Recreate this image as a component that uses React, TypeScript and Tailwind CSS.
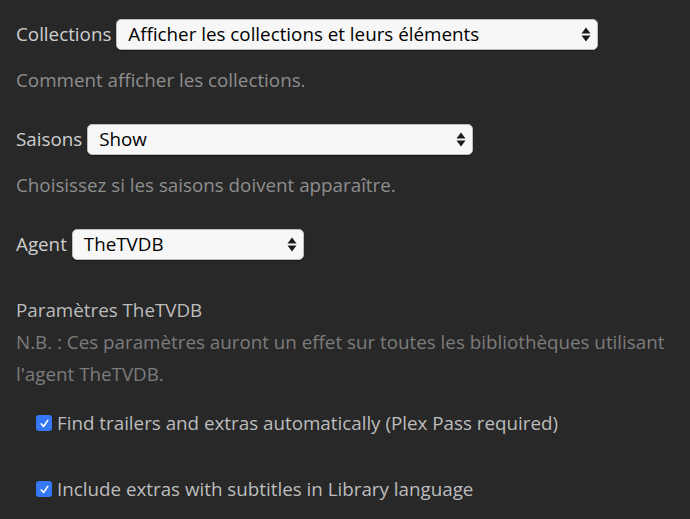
import React from 'react'

function Arrows() {
  return (
    <svg width="10" height="17" viewBox="0 0 10 17" className="shrink-0">
      <path d="M5 1.5 L9.5 7.5 L0.5 7.5 Z" fill="#1a1a1a" />
      <path d="M5 15.5 L9.5 9.5 L0.5 9.5 Z" fill="#1a1a1a" />
    </svg>
  )
}

function Select({ value, width }: { value: string; width: string }) {
  return (
    <div
      className={`${width} h-[31px] flex items-center justify-between pl-[11px] pr-[6px] bg-[#f7f7f7] rounded-[5px] border border-[#bdbdbd] shadow-[0_1px_1px_rgba(0,0,0,0.4)] text-black`}
    >
      <span>{value}</span>
      <Arrows />
    </div>
  )
}

function Checkbox() {
  return (
    <span className="w-4 h-4 rounded-[3px] bg-[#3478f6] flex items-center justify-center shrink-0">
      <svg width="11" height="11" viewBox="0 0 12 12">
        <path d="M2.5 6.5 L5 9.2 L9.6 2.6" stroke="white" strokeWidth="1.8" fill="none" strokeLinecap="round" strokeLinejoin="round" />
      </svg>
    </span>
  )
}

export default function App() {
  return (
    <div className="w-[690px] h-[519px] overflow-hidden bg-[#282828] px-4 pt-[19px] font-['Open_Sans',sans-serif] text-[18.8px]">
      <div className="flex items-center gap-[5px]">
        <span className="text-[#cfcfcf]">Collections</span>
        <Select value="Afficher les collections et leurs éléments" width="w-[482px]" />
      </div>
      <p className="mt-[17px] leading-[26px] text-[#8e8e8e]">Comment afficher les collections.</p>

      <div className="mt-[31px] flex items-center gap-[5px]">
        <span className="text-[#cfcfcf]">Saisons</span>
        <Select value="Show" width="w-[386px]" />
      </div>
      <p className="mt-[17px] leading-[26px] text-[#8e8e8e]">Choisissez si les saisons doivent apparaître.</p>

      <div className="mt-[31px] flex items-center gap-[5px]">
        <span className="text-[#cfcfcf]">Agent</span>
        <Select value="TheTVDB" width="w-[232px]" />
      </div>

      <div className="mt-[34px] leading-[32px]">
        <p className="text-[#bdbdbd]">Paramètres TheTVDB</p>
        <p className="text-[#7c7c7c]">N.B. : Ces paramètres auront un effet sur toutes les bibliothèques utilisant l'agent TheTVDB.</p>
      </div>

      <div className="mt-[20px] pl-5 flex flex-col gap-[40px]">
        <label className="flex items-center gap-[5px] leading-[26px] text-[#bdbdbd]">
          <Checkbox />
          <span>Find trailers and extras automatically (Plex Pass required)</span>
        </label>
        <label className="flex items-center gap-[5px] leading-[26px] text-[#bdbdbd]">
          <Checkbox />
          <span>Include extras with subtitles in Library language</span>
        </label>
      </div>
    </div>
  )
}
